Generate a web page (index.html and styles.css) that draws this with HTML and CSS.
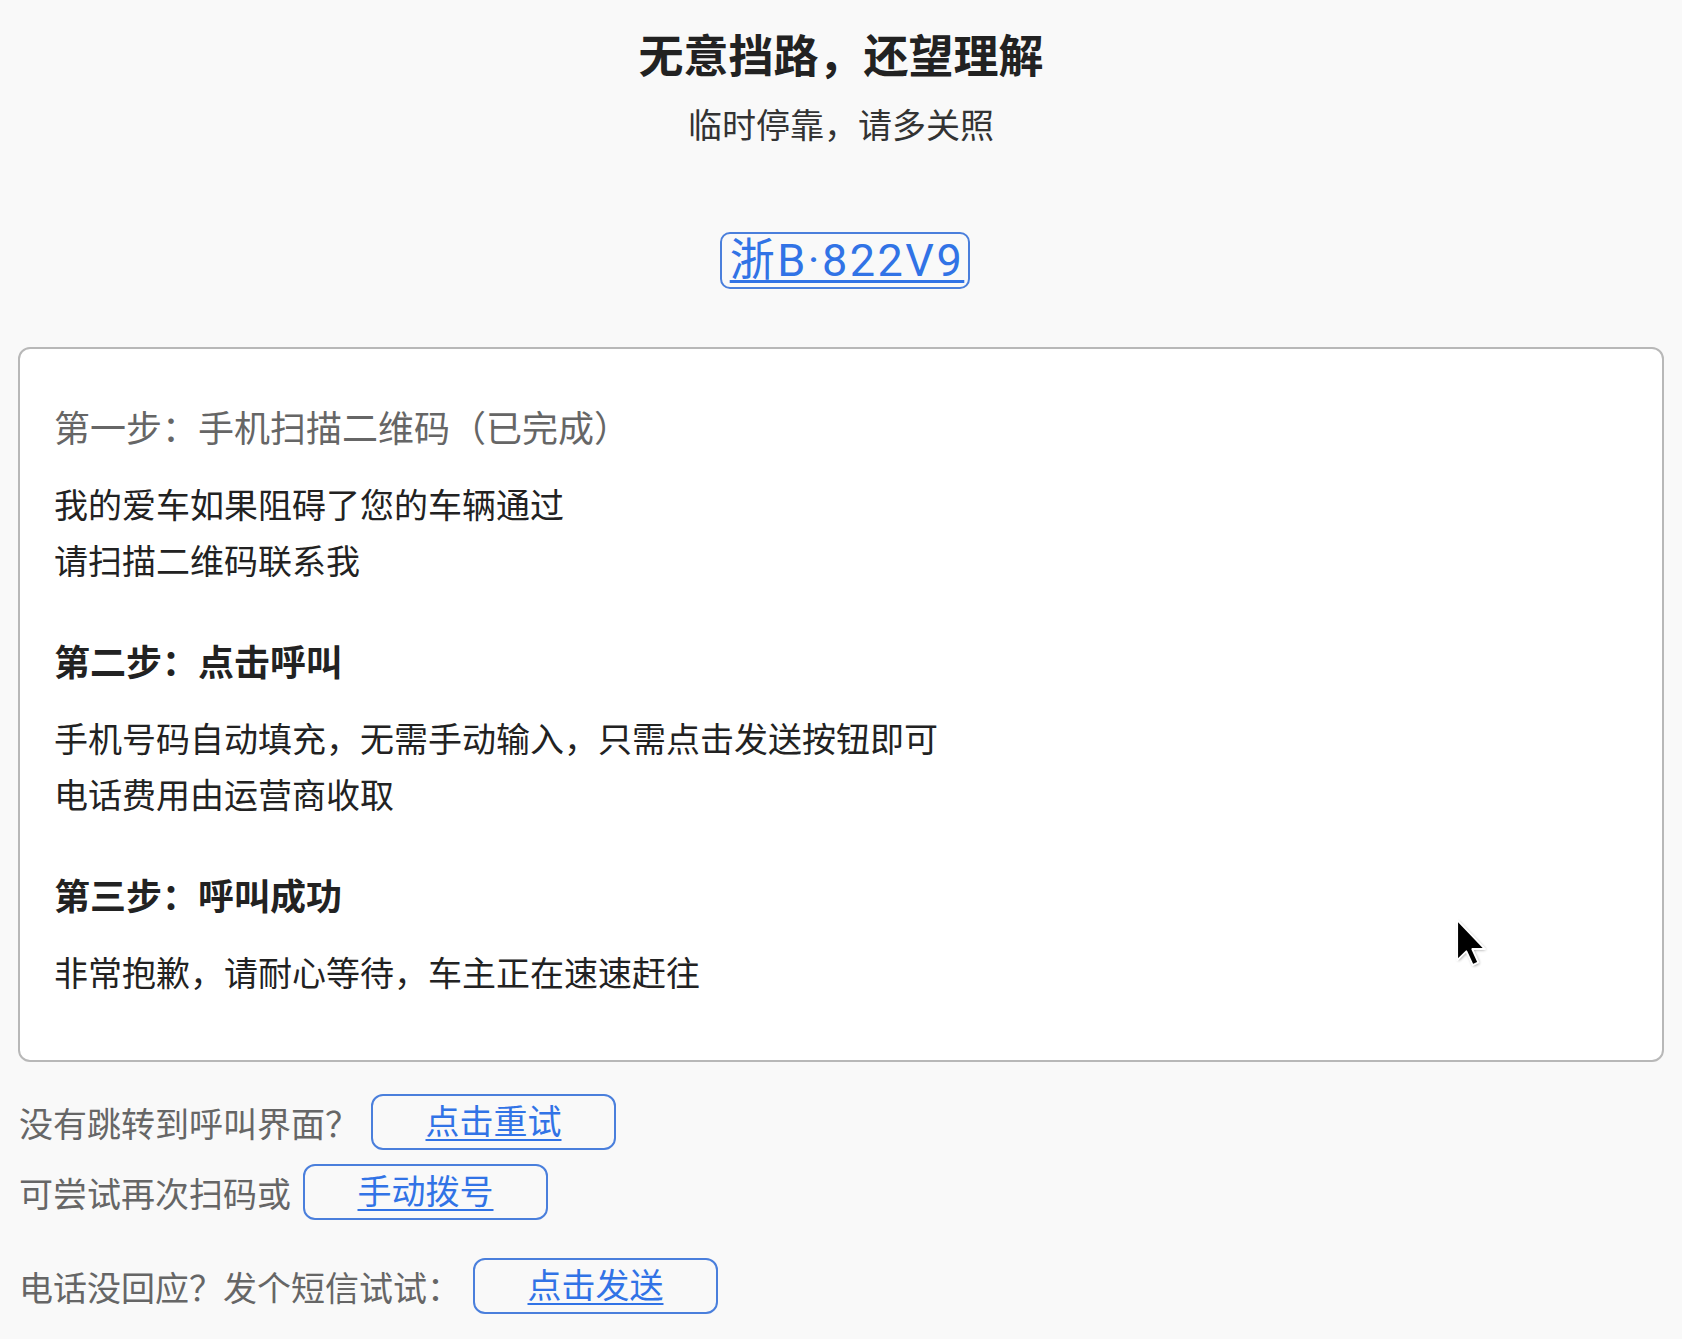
FILE: index.html
```html
<!DOCTYPE html>
<html lang="zh-CN">
<head>
<meta charset="utf-8">
<title>无意挡路，还望理解</title>
<link rel="stylesheet" href="styles.css">
</head>
<body>
<header class="head">
  <h1 class="title">无意挡路，还望理解</h1>
  <p class="subtitle">临时停靠，请多关照</p>
  <div class="plate-wrap"><a class="plate" href="#">浙B·822V9</a></div>
</header>
<section class="card">
  <p class="step step-done">第一步：手机扫描二维码（已完成）</p>
  <p class="text">我的爱车如果阻碍了您的车辆通过<br>请扫描二维码联系我</p>
  <p class="step step-bold">第二步：点击呼叫</p>
  <p class="text">手机号码自动填充，无需手动输入，只需点击发送按钮即可<br>电话费用由运营商收取</p>
  <p class="step step-bold">第三步：呼叫成功</p>
  <p class="text">非常抱歉，请耐心等待，车主正在速速赶往</p>
</section>
<section class="actions">
  <div class="row"><span class="label">没有跳转到呼叫界面？</span><a class="btn" href="#">点击重试</a></div>
  <div class="row"><span class="label">可尝试再次扫码或</span><a class="btn" href="#">手动拨号</a></div>
  <div class="row row-sms"><span class="label">电话没回应？发个短信试试：</span><a class="btn" href="#">点击发送</a></div>
</section>
<svg class="cursor" width="35" height="52" viewBox="0 0 18 27" aria-hidden="true">
  <defs>
    <filter id="sh" x="-50%" y="-50%" width="200%" height="200%">
      <feGaussianBlur stdDeviation="0.8"/>
    </filter>
  </defs>
  <path d="M1.5 1.5 L1.5 22.5 L6.3 17.8 L9.6 25 L12.6 23.6 L9.4 16.6 L16 16.6 Z" fill="#000" opacity="0.45" filter="url(#sh)"/>
  <path d="M1 1 L1 22 L5.8 17.3 L9.1 24.5 L12.1 23.1 L8.9 16.1 L15.5 16.1 Z" fill="#000" stroke="#fff" stroke-width="1" stroke-linejoin="round"/>
</svg>
</body>
</html>
```
FILE: styles.css
```css
html, body {
  margin: 0;
  padding: 0;
}
body {
  background: #f9f9f9;
  font-family: Roboto, "Noto Sans CJK SC", sans-serif;
  color: #222;
  position: relative;
  min-height: 1339px;
}
.head {
  text-align: center;
  padding-top: 28px;
}
.title {
  margin: 0;
  font-size: 45px;
  line-height: 60px;
  font-weight: 700;
  color: #222;
}
.subtitle {
  margin: 13px 0 0;
  font-size: 34px;
  line-height: 50px;
  color: #333;
}
.plate-wrap {
  margin-top: 81px;
  padding-left: 8px;
}
.plate {
  display: inline-block;
  box-sizing: border-box;
  height: 57px;
  padding: 0 4px 0 8px;
  border: 2px solid #4a7fdc;
  border-radius: 10px;
  font-size: 45px;
  line-height: 53px;
  letter-spacing: 2.5px;
  color: #3173e6;
  text-decoration: underline;
  text-decoration-thickness: 3px;
  text-underline-offset: 4px;
}
.card {
  margin: 58px 18px 0;
  background: #fff;
  border: 2px solid #b8b8b8;
  border-radius: 12px;
  padding: 53px 34px 58px;
}
.card p {
  margin: 0;
  font-size: 34px;
  line-height: 56px;
}
.card .step {
  font-size: 36px;
}
.step-done {
  color: #666;
}
.step-bold {
  font-weight: 700;
  color: #222;
  margin-top: 46px !important;
}
.text {
  margin-top: 20px !important;
  color: #222;
}
.actions {
  padding: 32px 19px 0;
}
.row {
  display: flex;
  align-items: center;
  gap: 12px;
  margin-bottom: 14px;
}
.row-sms {
  margin-top: 38px;
}
.label {
  font-size: 34px;
  color: #666;
}
.btn {
  box-sizing: border-box;
  width: 245px;
  height: 56px;
  border: 2px solid #4a7fdc;
  border-radius: 12px;
  font-size: 34px;
  line-height: 52px;
  text-align: center;
  color: #3173e6;
  text-decoration: underline;
  text-decoration-thickness: 2px;
  text-underline-offset: 5px;
}
.cursor {
  position: absolute;
  left: 1455px;
  top: 918px;
}
```
